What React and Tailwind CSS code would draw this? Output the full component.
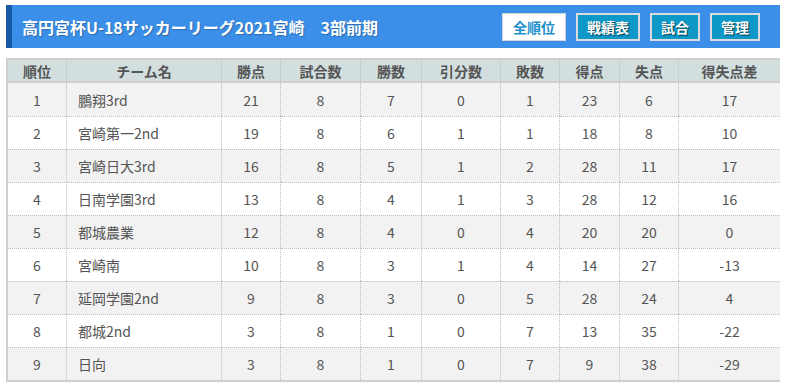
import React from "react";

const rows = [
  [1, "鵬翔3rd", 21, 8, 7, 0, 1, 23, 6, 17],
  [2, "宮崎第一2nd", 19, 8, 6, 1, 1, 18, 8, 10],
  [3, "宮崎日大3rd", 16, 8, 5, 1, 2, 28, 11, 17],
  [4, "日南学園3rd", 13, 8, 4, 1, 3, 28, 12, 16],
  [5, "都城農業", 12, 8, 4, 0, 4, 20, 20, 0],
  [6, "宮崎南", 10, 8, 3, 1, 4, 14, 27, -13],
  [7, "延岡学園2nd", 9, 8, 3, 0, 5, 28, 24, 4],
  [8, "都城2nd", 3, 8, 1, 0, 7, 13, 35, -22],
  [9, "日向", 3, 8, 1, 0, 7, 9, 38, -29],
];

const headers = ["順位", "チーム名", "勝点", "試合数", "勝数", "引分数", "敗数", "得点", "失点", "得失点差"];
const widths = [59, 155, 59, 80, 61, 79, 59, 60, 59, 101];

export default function App() {
  return (
    <div
      className="w-[787px] h-[389px] bg-white overflow-hidden"
      style={{ fontFamily: '"Noto Sans CJK JP", "Noto Sans", sans-serif' }}
    >
      <div className="ml-[6px] mr-[7px] mt-[5px] h-[43px] bg-[#3b8fe8] border-l-[6px] border-[#175ba6] flex items-center justify-between pl-[10px] pr-[20px]">
        <div className="text-white font-bold text-[16px] leading-none [text-shadow:1px_1px_1px_rgba(0,0,0,0.25)]">
          高円宮杯U-18サッカーリーグ2021宮崎　3部前期
        </div>
        <div className="flex gap-[10px]">
          <div className="w-[64px] h-[28px] bg-white border border-[#d6d6d6] flex items-center justify-center text-[#1c8fcc] font-bold text-[14px] leading-none">
            全順位
          </div>
          <div className="w-[64px] h-[28px] bg-[#0d98c8] border-2 border-[#dcdcdc] flex items-center justify-center text-white font-bold text-[14px] leading-none [text-shadow:1px_1px_1px_rgba(0,0,0,0.6)]">
            戦績表
          </div>
          <div className="w-[50px] h-[28px] bg-[#0d98c8] border-2 border-[#dcdcdc] flex items-center justify-center text-white font-bold text-[14px] leading-none [text-shadow:1px_1px_1px_rgba(0,0,0,0.6)]">
            試合
          </div>
          <div className="w-[50px] h-[28px] bg-[#0d98c8] border-2 border-[#dcdcdc] flex items-center justify-center text-white font-bold text-[14px] leading-none [text-shadow:1px_1px_1px_rgba(0,0,0,0.6)]">
            管理
          </div>
        </div>
      </div>

      <div className="ml-[6px] mt-[10px] w-[774px] border-2 border-[#cfcfcf]">
        <table className="w-full table-fixed border-separate border-spacing-0 text-[#555]">
          <colgroup>
            {widths.map((w, i) => (
              <col key={i} style={{ width: w }} />
            ))}
          </colgroup>
          <thead>
            <tr className="bg-[#d3dfdf]">
              {headers.map((h, i) => (
                <th
                  key={h}
                  className={`h-[23px] p-0 text-[14px] font-bold leading-none text-center text-[#555] [border-bottom:2px_solid_#cfcfcf] ${
                    i < headers.length - 1 ? "[border-right:1px_dotted_#bdbdbd]" : ""
                  }`}
                >
                  {h}
                </th>
              ))}
            </tr>
          </thead>
          <tbody>
            {rows.map((r, ri) => (
              <tr key={ri} className={ri % 2 === 0 ? "bg-[#f2f2f2]" : "bg-white"}>
                {r.map((v, ci) => (
                  <td
                    key={ci}
                    className={`h-[33px] p-0 text-[14px] leading-none ${
                      ci === 1 ? "text-left pl-[11px]" : "text-center"
                    } ${ri > 0 ? "[border-top:1px_dotted_#bdbdbd]" : ""} ${
                      ci < r.length - 1 ? "[border-right:1px_dotted_#bdbdbd]" : ""
                    }`}
                  >
                    {v}
                  </td>
                ))}
              </tr>
            ))}
          </tbody>
        </table>
      </div>
    </div>
  );
}
